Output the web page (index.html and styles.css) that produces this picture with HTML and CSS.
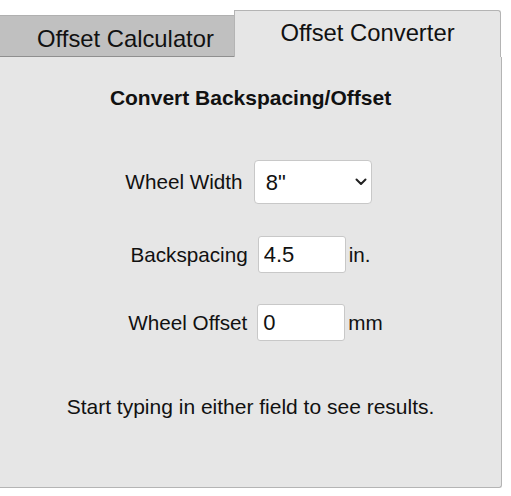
FILE: index.html
```html
<!DOCTYPE html>
<html>
<head>
<meta charset="utf-8">
<link rel="stylesheet" href="styles.css">
</head>
<body>
<div class="widget">
  <div class="tabs">
    <div class="tab tab-inactive">Offset Calculator</div>
    <div class="tab tab-active">Offset Converter</div>
  </div>
  <div class="panel">
    <h2 class="heading">Convert Backspacing/Offset</h2>
    <div class="row row-select">
      <label class="label">Wheel Width</label>
      <div class="select-wrap">
        <select class="select"><option>8"</option></select>
        <svg class="chevron" viewBox="0 0 12 8" width="12" height="8"><path d="M1.5 1.5 L6 6 L10.5 1.5" fill="none" stroke="#222" stroke-width="2" stroke-linecap="round" stroke-linejoin="round"/></svg>
      </div>
    </div>
    <div class="row row-bs">
      <label class="label">Backspacing</label>
      <input class="field" type="text" value="4.5">
      <span class="unit">in.</span>
    </div>
    <div class="row row-off">
      <label class="label">Wheel Offset</label>
      <input class="field" type="text" value="0">
      <span class="unit">mm</span>
    </div>
    <p class="hint">Start typing in either field to see results.</p>
  </div>
</div>
</body>
</html>
```
FILE: styles.css
```css
html, body {
  margin: 0;
  padding: 0;
  background: #fff;
}
body {
  font-family: "Liberation Sans", Arial, sans-serif;
  color: #111;
}
.widget {
  width: 502px;
  padding-top: 10px;
}
.tabs {
  display: flex;
  align-items: flex-end;
  height: 47px;
}
.tab {
  box-sizing: border-box;
  font-size: 23.8px;
  text-align: center;
}
.tab-inactive {
  width: 236px;
  height: 42px;
  margin-left: -1px;
  background: #c0c0c0;
  border-top: 1px solid #b0b0b0;
  border-right: 1px solid #8f8f8f;
  border-bottom: 1px solid #8f8f8f;
  padding-top: 9px;
  padding-left: 18px;
}
.tab-active {
  width: 267px;
  height: 47px;
  background: #e6e6e6;
  border: 1px solid #b4b4b4;
  border-bottom: none;
  border-top-right-radius: 3px;
  padding-top: 8px;
  margin-left: -1px;
}
.panel {
  box-sizing: border-box;
  width: 502px;
  height: 431px;
  background: #e6e6e6;
  border-right: 1px solid #b4b4b4;
  border-bottom: 1px solid #b4b4b4;
  border-bottom-right-radius: 3px;
  padding-top: 29px;
  display: flex;
  flex-direction: column;
  align-items: center;
}
.heading {
  margin: 0;
  font-size: 21px;
  font-weight: bold;
  line-height: 24px;
}
.row {
  display: flex;
  align-items: center;
}
.label {
  font-size: 20.7px;
}
.row-select {
  margin-top: 50px;
  padding-right: 4px;
}
.row-bs {
  margin-top: 32px;
  padding-left: 0;
}
.row-off {
  margin-top: 31px;
  padding-left: 10px;
}
.select-wrap {
  position: relative;
  margin-left: 11px;
}
.select {
  appearance: none;
  -webkit-appearance: none;
  box-sizing: border-box;
  width: 118px;
  height: 44px;
  border: 1px solid #c8c8c8;
  border-radius: 4px;
  background: #fff;
  font-family: "Liberation Sans", Arial, sans-serif;
  font-size: 22px;
  color: #111;
  padding: 0 0 0 11px;
  display: block;
}
.chevron {
  position: absolute;
  right: 5px;
  top: 18px;
  pointer-events: none;
}
.field {
  box-sizing: border-box;
  width: 88px;
  height: 37px;
  margin-left: 10px;
  border: 1px solid #c8c8c8;
  border-radius: 3px;
  background: #fff;
  font-family: "Liberation Sans", Arial, sans-serif;
  font-size: 22px;
  color: #111;
  padding: 0 0 0 5px;
}
.unit {
  font-size: 20.7px;
  margin-left: 3px;
}
.hint {
  margin: 54px 0 0;
  font-size: 21px;
  line-height: 24px;
}
```
